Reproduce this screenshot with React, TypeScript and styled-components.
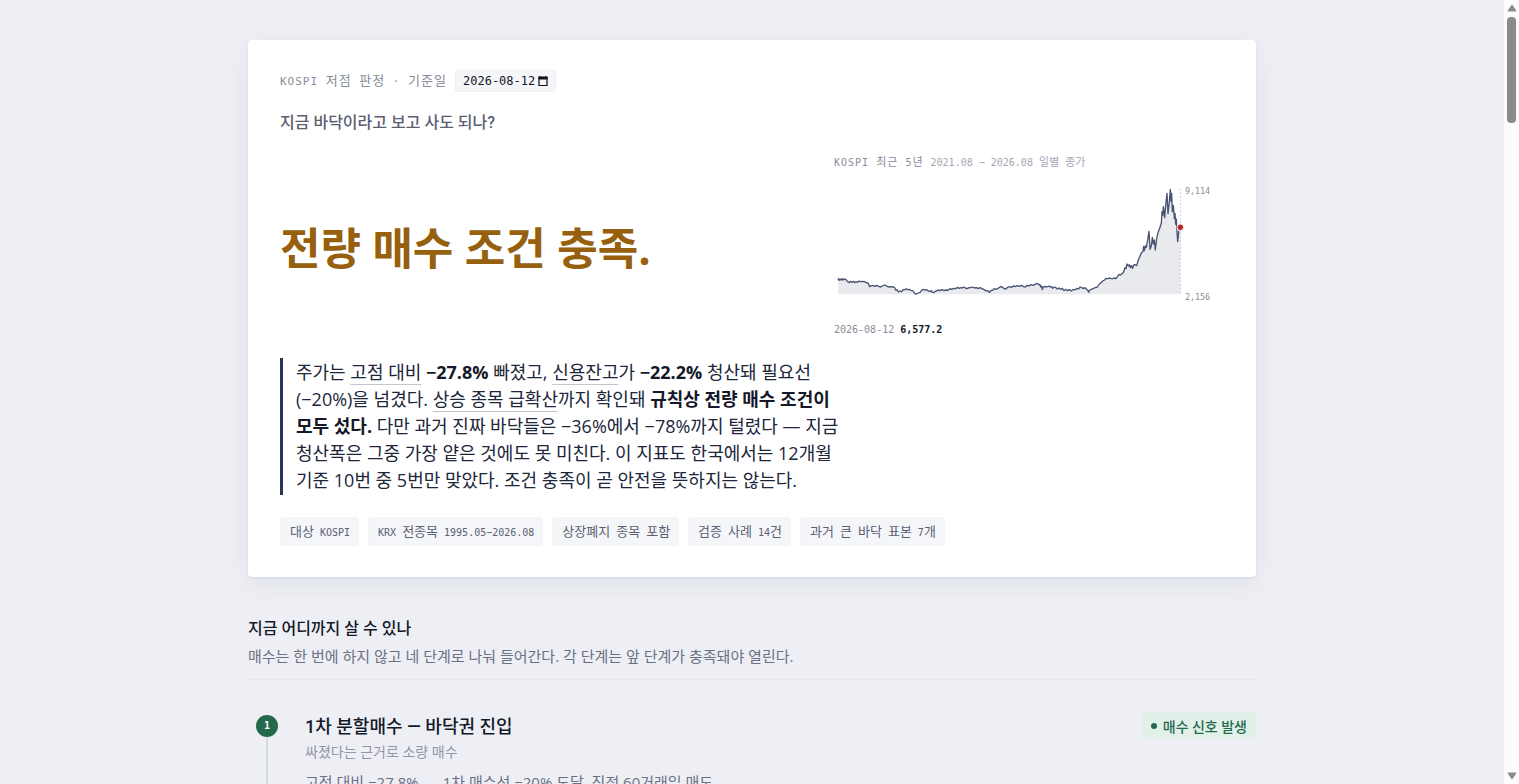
import React from "react";
import styled, { createGlobalStyle } from "styled-components";

const SANS = '"Open Sans", "Noto Sans CJK KR", sans-serif';
const HEADING = 'Roboto, "Noto Sans CJK KR", sans-serif';
const MONO = '"DejaVu Sans Mono", "Noto Sans CJK KR", monospace';

const GlobalStyle = createGlobalStyle`
  * { box-sizing: border-box; }
  body {
    margin: 0;
    background: #edeff4;
    color: #141828;
    font-family: ${SANS};
  }
  h1, h2, h3, p, figure, ol { margin: 0; padding: 0; font-weight: inherit; }
`;

const Shell = styled.div`
  display: flex;
  height: 100vh;
  overflow: hidden;
`;

const Viewport = styled.div`
  flex: 1;
  min-width: 0;
  overflow: hidden;
`;

const Page = styled.main`
  max-width: 1040px;
  margin: 0 auto;
  padding: 40px 16px;
`;

const ScrollTrack = styled.div`
  display: flex;
  flex-direction: column;
  align-items: center;
  gap: 5px;
  width: 15px;
  padding: 4px 0;
  background: #fcfcfc;
`;

const ScrollThumb = styled.div`
  width: 9px;
  height: 106px;
  border-radius: 4px;
  background: #8b8b8b;
`;

const ScrollSpace = styled.div`
  flex: 1;
`;

const Card = styled.section`
  padding: 30px 32px 31px;
  border-radius: 4px;
  background: #fff;
  box-shadow: 0 1px 2px rgba(20, 28, 60, 0.08), 0 8px 24px rgba(20, 28, 60, 0.06);
`;

const Eyebrow = styled.div`
  display: flex;
  align-items: center;
  gap: 8px;
  height: 22px;
  color: #888d9b;
  font: 11px/22px ${MONO};
  letter-spacing: 1px;
  white-space: pre;
`;

const Hangul = styled.span<{ $size: number }>`
  font-size: ${(p) => p.$size}px;
`;

const DateBox = styled.span`
  display: flex;
  align-items: center;
  gap: 2px;
  height: 22px;
  padding: 0 7px;
  border: 1px solid #eff1f5;
  border-radius: 2px;
  background: #f5f6fa;
`;

const DateInput = styled.input`
  width: 73px;
  padding: 0;
  border: 0;
  outline: 0;
  background: none;
  color: #141828;
  font: 12px/20px ${MONO};
`;

const IconButton = styled.button`
  display: flex;
  padding: 0;
  border: 0;
  background: none;
`;

const Question = styled.p`
  margin-top: 19px;
  color: #5a6072;
  font-family: ${HEADING};
  font-size: 16px;
  font-weight: 500;
  line-height: 24px;
`;

const Hero = styled.div`
  display: grid;
  grid-template-columns: minmax(0, 1fr) 390px;
  align-items: center;
  margin-top: 20px;
`;

const Verdict = styled.h1`
  padding-top: 2px;
  color: #96600f;
  font-size: 44px;
  font-weight: 700;
  line-height: 56px;
`;

const ChartTitle = styled.figcaption`
  display: flex;
  gap: 7px;
  color: #888d9b;
  font: 10px/16px ${MONO};
  white-space: pre;
`;

const ChartKey = styled.span`
  letter-spacing: 1px;
`;

const ChartRange = styled.span`
  color: #a3a7b2;
`;

const ChartSvg = styled.svg`
  display: block;
  width: 100%;
  height: 130px;
  margin: 9px 0 12px;
`;

const Reading = styled.p`
  color: #888d9b;
  font: 10px/16px ${MONO};

  strong { color: #141828; }
`;

const Summary = styled.p`
  max-width: 570px;
  margin-top: 20px;
  padding: 1px 0 1px 13px;
  border-left: 3px solid #2b3556;
  color: #20263a;
  font-size: 18px;
  line-height: 27px;
  word-break: keep-all;

  strong { color: #141828; font-weight: 700; }
`;

const Term = styled.span`
  text-decoration: underline 1px #c3c6cf;
  text-underline-offset: 5px;
`;

const Chips = styled.div`
  display: flex;
  flex-wrap: wrap;
  gap: 9px;
  margin-top: 22px;
`;

const Chip = styled.span`
  height: 29px;
  padding: 0 8px 0 9px;
  border: 1px solid #f3f4f8;
  border-radius: 3px;
  background: #f5f6fa;
  color: #5a6072;
  font: 10px/27px ${MONO};
  white-space: pre;
`;

const SectionHead = styled.header`
  margin-top: 41px;
  padding-bottom: 13px;
  border-bottom: 1px solid #e6e8ed;
`;

const SectionTitle = styled.h2`
  font-family: ${HEADING};
  font-size: 16px;
  font-weight: 500;
  line-height: 22px;
`;

const SectionNote = styled.p`
  margin-top: 6px;
  color: #6b7084;
  font-size: 15px;
  line-height: 20px;
`;

const Steps = styled.ol`
  margin-top: 32px;
  list-style: none;
`;

const Step = styled.li`
  display: grid;
  grid-template-columns: 22px minmax(0, 1fr) auto;
  column-gap: 27px;
  align-items: start;
  padding-left: 8px;
`;

const Rail = styled.div`
  display: flex;
  flex-direction: column;
  align-items: center;
  align-self: stretch;
  padding-top: 3px;
`;

const StepNumber = styled.span`
  width: 22px;
  height: 22px;
  border-radius: 50%;
  background: #24694c;
  color: #fff;
  font: bold 10px/22px ${MONO};
  text-align: center;
`;

const RailLine = styled.span`
  flex: 1;
  width: 2px;
  background: #d3dcdb;
`;

const StepBody = styled.div`
  min-height: 160px;
`;

const StepTitle = styled.h3`
  padding-top: 2px;
  font-family: ${HEADING};
  font-size: 18px;
  font-weight: 500;
  line-height: 26px;
`;

const StepNote = styled.p`
  margin-top: 2px;
  color: #9296a5;
  font-size: 14px;
  line-height: 20px;
`;

const StepFacts = styled.p`
  display: flex;
  gap: 24px;
  margin-top: 8px;
  color: #6b7084;
  font-size: 15px;
  line-height: 24px;
`;

const Badge = styled.span`
  display: flex;
  align-items: center;
  gap: 6px;
  height: 27px;
  padding: 0 9px;
  border-radius: 3px;
  background: #e2f0ea;
  color: #24694c;
  font-family: ${HEADING};
  font-size: 14px;
  font-weight: 500;

  &::before {
    content: "";
    width: 6px;
    height: 6px;
    border-radius: 50%;
    background: currentColor;
  }
`;

/* Monospace text whose Korean words are set larger than its figures. */
function Mixed({ text, size }: { text: string; size: number }) {
  return (
    <>
      {text.split(/([가-힣]+)/).map((part, i) =>
        i % 2 ? <Hangul key={i} $size={size}>{part}</Hangul> : part
      )}
    </>
  );
}

const LINE =
  "54,415 57,421 60,417 63,420 66,416 69,420 72,417 78,419 82,424 87,428 91,424 95,427 100,424 104,428 108,425 113,427 117,423 122,425 128,424 134,425 138,428 143,428 146,433 149,440 154,437 160,437 165,439 170,436 176,439 182,441 187,438 193,435 198,437 205,441 210,440 215,441 220,440 224,443 227,450 231,449 235,456 240,453 244,455 249,450 254,449 258,446 262,449 268,448 272,451 278,452 282,457 286,462 291,461 295,459 300,457 305,451 310,448 315,450 320,449 325,453 330,454 334,452 337,457 341,458 345,454 350,453 354,450 360,452 366,449 372,452 378,450 384,451 390,446 395,448 401,445 407,446 412,442 417,445 422,443 427,444 431,441 436,444 442,446 447,443 453,443 458,441 463,444 469,443 475,446 480,443 486,446 492,449 498,453 502,451 506,455 509,457 513,451 518,451 522,446 528,448 534,445 540,441 544,440 549,443 553,446 558,447 562,442 568,440 574,442 580,438 586,440 592,437 598,439 604,436 610,440 616,441 621,436 627,438 633,434 639,436 645,433 651,430 656,434 659,433 662,441 665,438 667,449 669,442 674,439 680,441 686,438 690,441 694,439 698,445 703,441 708,443 712,447 717,444 722,448 727,445 732,452 737,448 742,452 748,449 754,453 760,448 765,450 771,445 776,447 780,441 785,443 790,446 795,443 800,448 803,450 806,457 809,450 814,448 820,445 826,443 832,441 838,432 843,428 848,423 854,420 858,415 864,416 870,414 876,417 882,414 888,416 893,409 897,403 901,405 906,401 911,396 915,383 918,386 921,372 925,378 928,374 931,383 934,377 938,385 941,375 946,374 950,377 955,360 960,349 964,339 969,334 971,319 973,332 976,318 979,322 983,300 987,274 990,328 994,318 997,292 1000,312 1003,300 1006,330 1010,296 1015,275 1020,262 1024,250 1026,215 1028,226 1030,200 1034,233 1037,196 1041,160 1044,221 1048,186 1051,148 1053,184 1055,160 1057,215 1060,196 1063,235 1065,220 1067,253 1069,237 1071,276 1073,305 1077,268 1081,262";

function Chart() {
  return (
    <ChartSvg viewBox="42 120 1170 390" role="img" aria-label="KOSPI 최근 5년 일별 종가">
      <polygon points={`54,463 ${LINE} 1081,463`} fill="#e9eaee" />
      <line x1="1081" y1="146" x2="1081" y2="463" stroke="#c3c6cf" strokeWidth="3" strokeDasharray="5 6" />
      <polyline points={LINE} fill="none" stroke="#4a5272" strokeWidth="4" strokeLinejoin="round" />
      <circle cx="1081" cy="262" r="10" fill="#b3262e" stroke="#fff" strokeWidth="3" />
      <g fill="#888d9b" fontSize="25" fontFamily="DejaVu Sans Mono, monospace">
        <text x="1095" y="161">9,114</text>
        <text x="1095" y="479">2,156</text>
      </g>
    </ChartSvg>
  );
}

const FACTS = [
  "대상 KOSPI",
  "KRX 전종목 1995.05−2026.08",
  "상장폐지 종목 포함",
  "검증 사례 14건",
  "과거 큰 바닥 표본 7개",
];

export default function App() {
  return (
    <Shell>
      <GlobalStyle />
      <Viewport>
        <Page>
          <Card>
            <Eyebrow>
              <label htmlFor="base-date">
                <Mixed text="KOSPI 저점 판정 · 기준일" size={13} />
              </label>
              <DateBox>
                <DateInput id="base-date" type="text" defaultValue="2026-08-12" />
                <IconButton type="button" aria-label="날짜 선택">
                  <svg width="10" height="11" viewBox="0 0 10 11">
                    <path d="M2 0v2M8 0v2" stroke="#111" strokeWidth="1" />
                    <path d="M1 1h8v8.5h-8z" fill="none" stroke="#111" strokeWidth="1.2" />
                    <path d="M.5 1h9v2.5h-9z" fill="#111" />
                  </svg>
                </IconButton>
              </DateBox>
            </Eyebrow>
            <Question>지금 바닥이라고 보고 사도 되나?</Question>

            <Hero>
              <Verdict>전량 매수 조건 충족.</Verdict>
              <figure>
                <ChartTitle>
                  <ChartKey><Mixed text="KOSPI 최근 5년" size={11} /></ChartKey>
                  <ChartRange><Mixed text="2021.08 − 2026.08 일별 종가" size={11} /></ChartRange>
                </ChartTitle>
                <Chart />
                <Reading>2026-08-12 <strong>6,577.2</strong></Reading>
              </figure>
            </Hero>

            <Summary>
              주가는 <Term>고점 대비</Term> <strong>−27.8%</strong> 빠졌고, <Term>신용잔고</Term>가{" "}
              <strong>−22.2%</strong> 청산돼 필요선
              <wbr />
              (−20%)을 넘겼다. <Term>상승 종목 급확산</Term>까지 확인돼{" "}
              <strong>규칙상 전량 매수 조건이 모두 섰다.</strong> 다만 과거 진짜 바닥들은 −36%에서 −78%까지
              털렸다 — 지금 청산폭은 그중 가장 얕은 것에도 못 미친다. 이 지표도 한국에서는 12개월 기준 10번 중
              5번만 맞았다. 조건 충족이 곧 안전을 뜻하지는 않는다.
            </Summary>

            <Chips>
              {FACTS.map((fact) => (
                <Chip key={fact}><Mixed text={fact} size={13} /></Chip>
              ))}
            </Chips>
          </Card>

          <SectionHead>
            <SectionTitle>지금 어디까지 살 수 있나</SectionTitle>
            <SectionNote>
              매수는 한 번에 하지 않고 네 단계로 나눠 들어간다. 각 단계는 앞 단계가 충족돼야 열린다.
            </SectionNote>
          </SectionHead>

          <Steps>
            <Step>
              <Rail>
                <StepNumber>1</StepNumber>
                <RailLine />
              </Rail>
              <StepBody>
                <StepTitle>1차 분할매수 — 바닥권 진입</StepTitle>
                <StepNote>싸졌다는 근거로 소량 매수</StepNote>
                <StepFacts>
                  <span>고점 대비 −27.8%</span>
                  <span>1차 매수선 −20% 도달, 직전 60거래일 매도</span>
                </StepFacts>
              </StepBody>
              <Badge>매수 신호 발생</Badge>
            </Step>
          </Steps>
        </Page>
      </Viewport>
      <ScrollTrack aria-hidden="true">
        <svg width="10" height="8" viewBox="0 0 10 8"><path d="M5 1 9 7H1z" fill="#8b8b8b" stroke="#8b8b8b" strokeLinejoin="round" /></svg>
        <ScrollThumb />
        <ScrollSpace />
        <svg width="10" height="8" viewBox="0 0 10 8"><path d="M5 7 9 1H1z" fill="#8b8b8b" stroke="#8b8b8b" strokeLinejoin="round" /></svg>
      </ScrollTrack>
    </Shell>
  );
}
